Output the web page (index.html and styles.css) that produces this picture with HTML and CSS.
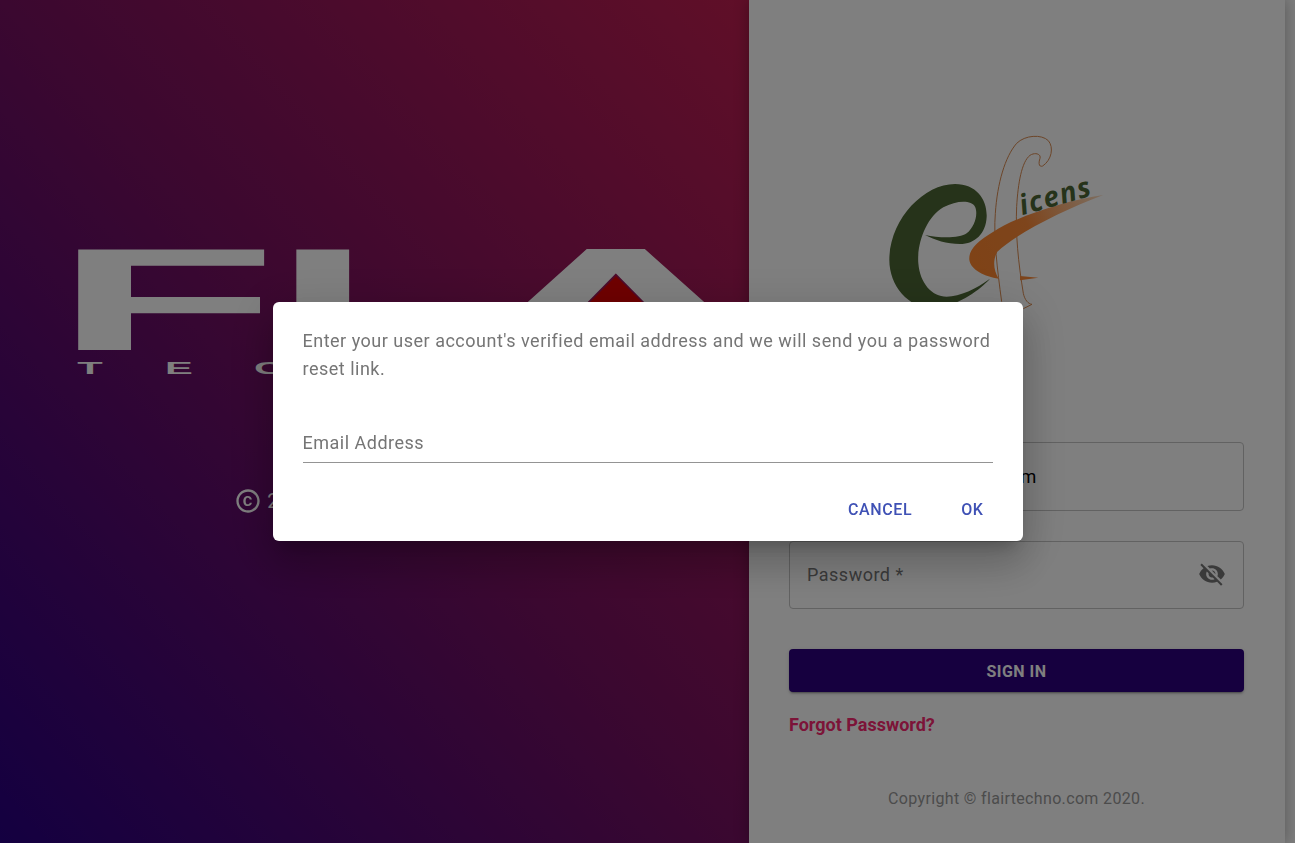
FILE: index.html
```html
<!DOCTYPE html>
<html lang="en">
<head>
    <meta charset="UTF-8">
    <meta name="viewport" content="width=device-width, initial-scale=1.0">
    <title>Sign In</title>
    <link rel="stylesheet" href="styles.css">
</head>
<body>
    <div class="page">
        <section class="brand-panel">
            <svg class="brand-logo" viewBox="0 0 749 130" role="img" aria-label="Flair Techno">
                <g transform="scale(2.51 1)">
                    <text class="brand-word" x="21.4" y="105">F</text>
                    <text class="brand-word" x="108.3" y="105">L</text>
                </g>
                <g transform="scale(3 1)">
                    <text class="brand-word brand-word-a" x="205.3" y="105">A</text>
                </g>
                <polygon class="brand-mark" points="616,31 681,96 551,96"></polygon>
                <g transform="scale(2.45 1)">
                    <text class="brand-sub" x="31.5" y="129">T</text>
                    <text class="brand-sub" x="67.4" y="129">E</text>
                    <text class="brand-sub" x="103.7" y="129">C</text>
                </g>
            </svg>
            <div class="brand-copy">
                <svg class="brand-copy-icon" viewBox="0 0 24 24">
                    <path d="M11.88 9.14c1.28.06 1.61 1.15 1.63 1.66h1.79c-.08-1.98-1.49-3.19-3.45-3.19C9.64 7.61 8 9 8 12.14c0 1.94.93 4.24 3.84 4.24 2.22 0 3.41-1.65 3.44-2.95h-1.79c-.03.59-.45 1.38-1.63 1.44-1.32-.04-1.86-1.07-1.86-2.73 0-2.87 1.27-2.98 1.88-3zM12 2C6.48 2 2 6.48 2 12s4.48 10 10 10 10-4.48 10-10S17.52 2 12 2zm0 18c-4.41 0-8-3.59-8-8s3.59-8 8-8 8 3.59 8 8-3.59 8-8 8z"></path>
                </svg>
                <span>2020 Flair Techno Systems</span>
            </div>
        </section>

        <section class="login-panel">
            <svg class="login-logo" viewBox="0 0 780 570" role="img" aria-label="Efficens">
                <defs>
                    <linearGradient id="swoosh" x1="330" y1="420" x2="730" y2="225" gradientUnits="userSpaceOnUse">
                        <stop offset="0" stop-color="#fe862e"></stop>
                        <stop offset="0.45" stop-color="#fc8a38"></stop>
                        <stop offset="1" stop-color="#fbdcc0"></stop>
                    </linearGradient>
                </defs>
                <path class="logo-f" d="M425 545 C412 450 400 350 406 280 C412 190 435 110 470 70 C495 45 545 42 565 62 C582 82 575 120 548 138 C538 142 534 132 540 115 C544 102 525 96 510 106 C485 125 474 190 470 260 C466 340 475 430 490 520 C494 540 505 552 516 553 L490 566"></path>
                <path class="logo-e" d="M195 345 C240 355 300 355 320 340 C345 320 355 280 345 260 C335 240 290 240 250 262 C200 290 170 370 175 430 C180 490 215 530 260 530 C300 530 350 505 390 476 C360 510 300 550 240 565 C150 575 88 500 88 420 C88 300 190 192 285 192 C350 192 382 240 380 290 C378 340 345 372 300 372 C260 372 225 360 195 345 Z"></path>
                <path class="logo-swoosh" d="M730 225 C620 240 470 290 400 335 C350 365 325 390 328 420 C332 450 375 470 416 476 C400 450 398 420 412 395 C470 340 610 270 730 225 Z"></path>
                <path class="logo-spike" d="M480 468 L535 473 L480 481 Z"></path>
                <text class="logo-text" transform="translate(487 286) rotate(-16)">icens</text>
            </svg>

            <form class="login-form">
                <div class="field">
                    <input class="field-input" type="text" value="customer@flairtechno.com">
                </div>
                <div class="field field-password">
                    <span class="field-label">Password *</span>
                    <svg class="eye-icon" viewBox="0 0 24 24">
                        <path d="M12 7c2.76 0 5 2.24 5 5 0 .65-.13 1.26-.36 1.83l2.92 2.92c1.51-1.26 2.7-2.89 3.43-4.75-1.73-4.39-6-7.5-11-7.5-1.4 0-2.74.25-3.98.7l2.16 2.16C10.74 7.13 11.35 7 12 7zM2 4.27l2.28 2.28.46.46C3.08 8.3 1.78 10.02 1 12c1.73 4.39 6 7.5 11 7.5 1.55 0 3.03-.3 4.38-.84l.42.42L19.73 22 21 20.73 3.27 3 2 4.27zM7.53 9.8l1.55 1.55c-.05.21-.08.43-.08.65 0 1.66 1.34 3 3 3 .22 0 .44-.03.65-.08l1.55 1.55c-.67.33-1.41.53-2.2.53-2.76 0-5-2.24-5-5 0-.79.2-1.53.53-2.2zm4.31-.78l3.15 3.15.02-.16c0-1.66-1.34-3-3-3l-.17.01z"></path>
                    </svg>
                </div>
                <button class="signin-btn" type="button">Sign In</button>
                <a class="forgot-link" href="#">Forgot Password?</a>
            </form>

            <p class="login-copy">Copyright © flairtechno.com 2020.</p>
        </section>
    </div>

    <div class="backdrop">
        <div class="dialog">
            <p class="dialog-text">Enter your user account's verified email address and we will send you a password reset link.</p>
            <div class="dialog-field">Email Address</div>
            <div class="dialog-actions">
                <button class="dialog-btn dialog-btn-cancel" type="button">Cancel</button>
                <button class="dialog-btn" type="button">OK</button>
            </div>
        </div>
    </div>
</body>
</html>
```

FILE: styles.css
```css
* {
    box-sizing: border-box;
}

html,
body {
    height: 100%;
}

body {
    margin: 0;
    overflow: hidden;
    font-family: Roboto, "Liberation Sans", sans-serif;
    background-color: #fafafa;
}

.page {
    display: flex;
    height: 100vh;
}

/* left side */
.brand-panel {
    width: 749px;
    flex-shrink: 0;
    padding-top: 245px;
    background: linear-gradient(to top right, #280082 0%, #761060 50%, #c01e50 100%);
    overflow: hidden;
}

.brand-logo {
    display: block;
    width: 749px;
    height: 130px;
}

.brand-word {
    font-family: "Liberation Sans", Arial, sans-serif;
    font-size: 146px;
    font-weight: bold;
    fill: #fff;
}

.brand-word-a {
    font-family: Roboto, sans-serif;
    font-size: 142px;
    text-anchor: middle;
}

.brand-sub {
    font-family: "Liberation Sans", Arial, sans-serif;
    font-size: 17px;
    font-weight: bold;
    fill: #fff;
}

.brand-mark {
    fill: #de0000;
}

.brand-copy {
    display: flex;
    align-items: center;
    justify-content: center;
    gap: 5px;
    margin-top: 112px;
    color: #fff;
    font-size: 20px;
    letter-spacing: 0.3px;
}

.brand-copy-icon {
    width: 28px;
    height: 28px;
    fill: #fff;
}

/* right side */
.login-panel {
    width: 536px;
    flex-shrink: 0;
    padding: 120px 41px 0 40px;
    background-color: #fff;
    box-shadow: 0 0 14px rgba(0, 0, 0, 0.3);
}

.login-logo {
    display: block;
    width: 260px;
    height: 190px;
    margin-left: 71px;
}

.logo-e,
.logo-text {
    fill: #4c6634;
}

.logo-f {
    fill: none;
    stroke: #d98a50;
    stroke-width: 3;
}

.logo-swoosh {
    fill: url(#swoosh);
}

.logo-spike {
    fill: #fc8a38;
}

.logo-text {
    font-family: "Open Sans", sans-serif;
    font-size: 84px;
    font-style: italic;
    font-weight: 700;
    letter-spacing: 4px;
}

.login-form {
    display: flex;
    flex-direction: column;
    margin-top: 132px;
}

.field {
    height: 69px;
    border: 1px solid #c4c4c4;
    border-radius: 4px;
}

.field-input {
    width: 100%;
    height: 100%;
    padding: 0 16px;
    border: none;
    background: none;
    outline: none;
    color: #000;
    font-family: inherit;
    font-size: 18px;
    letter-spacing: 0.5px;
}

.field-password {
    display: flex;
    align-items: center;
    justify-content: space-between;
    height: 68px;
    margin-top: 30px;
    padding: 0 17px 2px;
}

.field-label {
    color: #757575;
    font-size: 18px;
    letter-spacing: 0.5px;
}

.eye-icon {
    width: 28px;
    height: 28px;
    fill: #757575;
}

.signin-btn {
    height: 43px;
    margin-top: 40px;
    padding-top: 2px;
    border: none;
    border-radius: 4px;
    background-color: #2c007e;
    color: #fff;
    font-family: inherit;
    font-size: 16px;
    font-weight: 700;
    letter-spacing: 0.46px;
    text-transform: uppercase;
    box-shadow: 0 3px 1px -2px rgba(0, 0, 0, 0.2), 0 2px 2px 0 rgba(0, 0, 0, 0.14), 0 1px 5px 0 rgba(0, 0, 0, 0.12);
    cursor: pointer;
}

.forgot-link {
    margin-top: 22px;
    color: #f82870;
    font-size: 18px;
    font-weight: 700;
    line-height: 21px;
    text-decoration: none;
}

.login-copy {
    margin: 52px 0 0;
    color: #989898;
    font-size: 16px;
    line-height: 24px;
    letter-spacing: 0.35px;
    text-align: center;
}

/* reset password dialog */
.backdrop {
    position: fixed;
    top: 0;
    left: 0;
    right: 0;
    bottom: 0;
    display: flex;
    align-items: center;
    justify-content: center;
    background-color: rgba(0, 0, 0, 0.5);
}

.dialog {
    width: 750px;
    height: 239px;
    padding: 25px 30px 0;
    border-radius: 6px;
    background-color: #fff;
    box-shadow: 0 11px 15px -7px rgba(0, 0, 0, 0.2), 0 24px 38px 3px rgba(0, 0, 0, 0.14), 0 9px 46px 8px rgba(0, 0, 0, 0.12);
}

.dialog-text {
    margin: 0;
    color: #757575;
    font-size: 18px;
    line-height: 28px;
    letter-spacing: 0.5px;
}

.dialog-field {
    height: 33px;
    margin-top: 47px;
    padding-top: 1px;
    border-bottom: 1px solid #949494;
    color: #757575;
    font-size: 18px;
    line-height: 24px;
    letter-spacing: 0.5px;
}

.dialog-actions {
    display: flex;
    justify-content: flex-end;
    gap: 32px;
    margin-top: 29px;
    padding-right: 9px;
}

.dialog-btn {
    padding: 0;
    border: none;
    background: none;
    color: #3f51b5;
    font-family: inherit;
    font-size: 16px;
    font-weight: 500;
    line-height: 36px;
    letter-spacing: 0.6px;
    text-transform: uppercase;
    cursor: pointer;
}

.dialog-btn-cancel {
    margin-right: 17px;
}
```
